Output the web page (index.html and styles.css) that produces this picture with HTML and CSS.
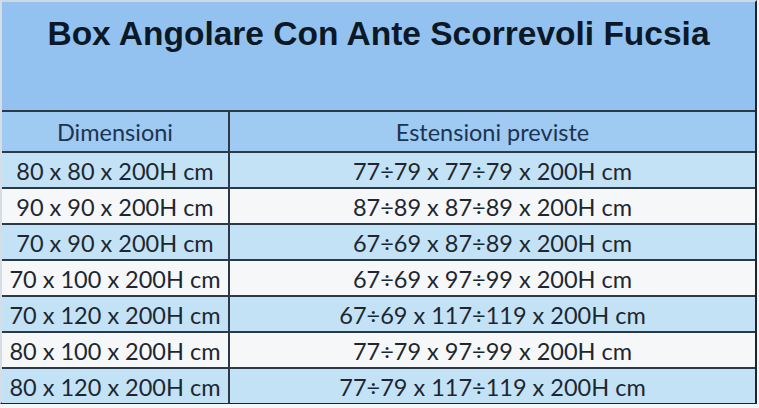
FILE: index.html
```html
<!DOCTYPE html>
<html lang="it">
<head>
<meta charset="utf-8">
<title>Box Angolare Con Ante Scorrevoli Fucsia</title>
<link rel="stylesheet" href="styles.css">
</head>
<body>
<div class="sheet">
  <div class="title"><h1>Box Angolare Con Ante Scorrevoli Fucsia</h1></div>
  <table class="sizes">
    <thead>
      <tr><th class="c1">Dimensioni</th><th class="c2">Estensioni previste</th></tr>
    </thead>
    <tbody>
      <tr class="blue"><td>80 x 80 x 200H cm</td><td>77÷79 x 77÷79 x 200H cm</td></tr>
      <tr class="white"><td>90 x 90 x 200H cm</td><td>87÷89 x 87÷89 x 200H cm</td></tr>
      <tr class="blue"><td>70 x 90 x 200H cm</td><td>67÷69 x 87÷89 x 200H cm</td></tr>
      <tr class="white"><td>70 x 100 x 200H cm</td><td>67÷69 x 97÷99 x 200H cm</td></tr>
      <tr class="blue"><td>70 x 120 x 200H cm</td><td>67÷69 x 117÷119 x 200H cm</td></tr>
      <tr class="white"><td>80 x 100 x 200H cm</td><td>77÷79 x 97÷99 x 200H cm</td></tr>
      <tr class="blue"><td>80 x 120 x 200H cm</td><td>77÷79 x 117÷119 x 200H cm</td></tr>
    </tbody>
  </table>
</div>
</body>
</html>
```
FILE: styles.css
```css
html, body {
  margin: 0;
  padding: 0;
  background: #f4f6f8;
}
.sheet {
  width: 757px;
  height: 404px;
  box-sizing: border-box;
  border-top: 2px solid #cfd9e3;
  border-left: 2px solid #d6dde4;
  border-right: 2px solid #1e252c;
  border-bottom: 2px solid #1e252c;
  display: flex;
  flex-direction: column;
}
.title {
  height: 110px;
  flex: none;
  background: #93c2f0;
  border-bottom: 2px solid #2c3a48;
  box-sizing: border-box;
  display: flex;
  justify-content: center;
  padding-top: 12px;
}
.title h1 {
  margin: 0;
  font-family: "Liberation Sans", Arial, sans-serif;
  font-weight: bold;
  font-size: 33.5px;
  line-height: 40px;
  color: #0b1826;
}
.sizes {
  border-collapse: collapse;
  width: 100%;
  table-layout: fixed;
  font-family: Lato, "Open Sans", sans-serif;
  font-size: 23.5px;
  color: #1e2730;
}
.sizes .c1 { width: 227px; }
.sizes th {
  height: 40px;
  padding: 1px 0 0;
  box-sizing: border-box;
  font-weight: normal;
  background: #9fcaf1;
  color: #1c3452;
  border-right: 2px solid #2c3a48;
  border-bottom: 2px solid #2c3a48;
  text-align: center;
}
.sizes th:last-child,
.sizes td:last-child { border-right: none; }
.sizes td {
  height: 32px;
  padding: 2px 0 0;
  text-align: center;
  border-right: 2px solid #2c3a48;
  border-bottom: 2px solid #2c3a48;
}
.sizes tbody tr:last-child td { border-bottom: none; }
.sizes .blue td { background: #c4e2f6; }
.sizes .white td { background: #f6f7f8; }
```
